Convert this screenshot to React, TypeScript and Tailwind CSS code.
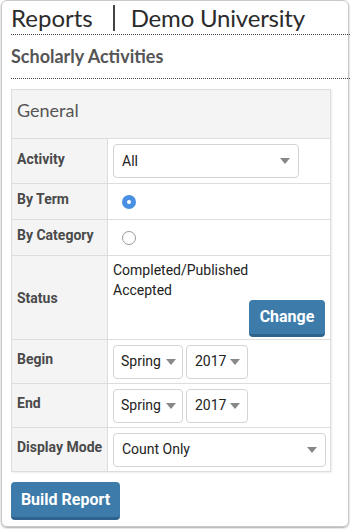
import React from "react";

const roboto = { fontFamily: "Roboto, 'Liberation Sans', sans-serif" };
const raleway = { fontFamily: "Lato, 'Open Sans', sans-serif" };

function Caret() {
  return (
    <svg width="10" height="6" viewBox="0 0 10 6" className="shrink-0">
      <path d="M0 0 L10 0 L5 6 Z" fill="#888" />
    </svg>
  );
}

function Select({ value, className }: { value: string; className: string }) {
  return (
    <div
      className={`flex items-center justify-between border border-[#d4d4d4] rounded-[4px] bg-white pl-[8px] pr-[8px] text-[14px] text-[#222] ${className}`}
    >
      <span>{value}</span>
      <Caret />
    </div>
  );
}

function Row({
  label,
  h,
  children,
  top = true,
}: {
  label: string;
  h: string;
  children: React.ReactNode;
  top?: boolean;
}) {
  return (
    <div className={`flex ${h} ${top ? "border-t border-[#dddddd]" : ""}`}>
      <div className="w-[96px] shrink-0 bg-[#f4f4f4] border-r border-[#dddddd] flex items-center pl-[5px] pb-[4px] text-[14px] font-bold text-[#4a4a4a]">
        {label}
      </div>
      <div className="flex-1 flex items-center px-[5px]">{children}</div>
    </div>
  );
}

export default function App() {
  return (
    <div className="w-[351px] h-[529px] bg-white overflow-hidden" style={roboto}>
      <div className="ml-[1px] w-[348px] h-[527px] border border-[#c9c9c9] rounded-[6px] shadow-[0_1px_2px_rgba(0,0,0,0.35)] pl-[9px] relative">
        <div className="mr-[-4px]">
          <div
            className="flex items-center h-[33px] text-[24px] text-[#2b2b2b] leading-none"
            style={raleway}
          >
            <span>Reports</span>
            <span className="inline-block w-[2px] h-[26px] bg-[#444] ml-[20px] mr-[16px]" />
            <span className="tracking-[-0.2px]">Demo University</span>
          </div>
          <div className="border-t border-dotted border-[#444]" />
          <div
            className="h-[43px] flex items-center text-[18px] font-bold text-[#555]"
            style={raleway}
          >
            Scholarly Activities
          </div>
          <div className="border-t border-dotted border-[#444]" />
        </div>

        <div className="mt-[10px] w-[320px] border border-[#dddddd] shadow-[1px_1px_2px_rgba(0,0,0,0.08)]">
          <div
            className="h-[48px] bg-[#f4f4f4] flex items-center pl-[5px] pb-[8px] text-[18px] text-[#555]"
            style={raleway}
          >
            General
          </div>
          <Row label="Activity" h="h-[45px]">
            <Select value="All" className="w-[186px] h-[34px]" />
          </Row>
          <Row label="By Term" h="h-[36px]">
            <div className="ml-[9px] w-[14px] h-[14px] rounded-full bg-[#4a90e2] flex items-center justify-center">
              <div className="w-[4px] h-[4px] rounded-full bg-white" />
            </div>
          </Row>
          <Row label="By Category" h="h-[36px]">
            <div className="ml-[9px] w-[14px] h-[14px] rounded-full border border-[#9a9a9a] bg-white" />
          </Row>
          <div className="flex h-[84px] border-t border-[#dddddd]">
            <div className="w-[96px] shrink-0 bg-[#f4f4f4] border-r border-[#dddddd] flex items-center pl-[5px] pt-[1px] text-[14px] font-bold text-[#4a4a4a]">
              Status
            </div>
            <div className="flex-1 flex flex-col px-[5px] pt-[4px]">
              <div className="text-[14px] leading-[20px] text-[#222]">Completed/Published</div>
              <div className="text-[14px] leading-[20px] text-[#222]">Accepted</div>
              <div className="flex justify-end">
                <div className="w-[76px] h-[37px] rounded-[4px] bg-[#3d7caa] border-b-[3px] border-[#2d638c] flex items-center justify-center text-white font-bold text-[16px]">
                  Change
                </div>
              </div>
            </div>
          </div>
          <Row label="Begin" h="h-[44px]">
            <div className="flex gap-[3px]">
              <Select value="Spring" className="w-[70px] h-[34px] !pl-[7px] !pr-[6px]" />
              <Select value="2017" className="w-[62px] h-[34px] !pl-[8px] !pr-[7px]" />
            </div>
          </Row>
          <Row label="End" h="h-[44px]">
            <div className="flex gap-[3px]">
              <Select value="Spring" className="w-[70px] h-[34px] !pl-[7px] !pr-[6px]" />
              <Select value="2017" className="w-[62px] h-[34px] !pl-[8px] !pr-[7px]" />
            </div>
          </Row>
          <Row label="Display Mode" h="h-[44px]">
            <Select value="Count Only" className="w-[213px] h-[34px]" />
          </Row>
        </div>

        <div className="mt-[10px] w-[109px] h-[38px] rounded-[4px] bg-[#3d7caa] border-b-[3px] border-[#2d638c] flex items-center justify-center text-white font-bold text-[16px]">
          Build Report
        </div>
      </div>
    </div>
  );
}
